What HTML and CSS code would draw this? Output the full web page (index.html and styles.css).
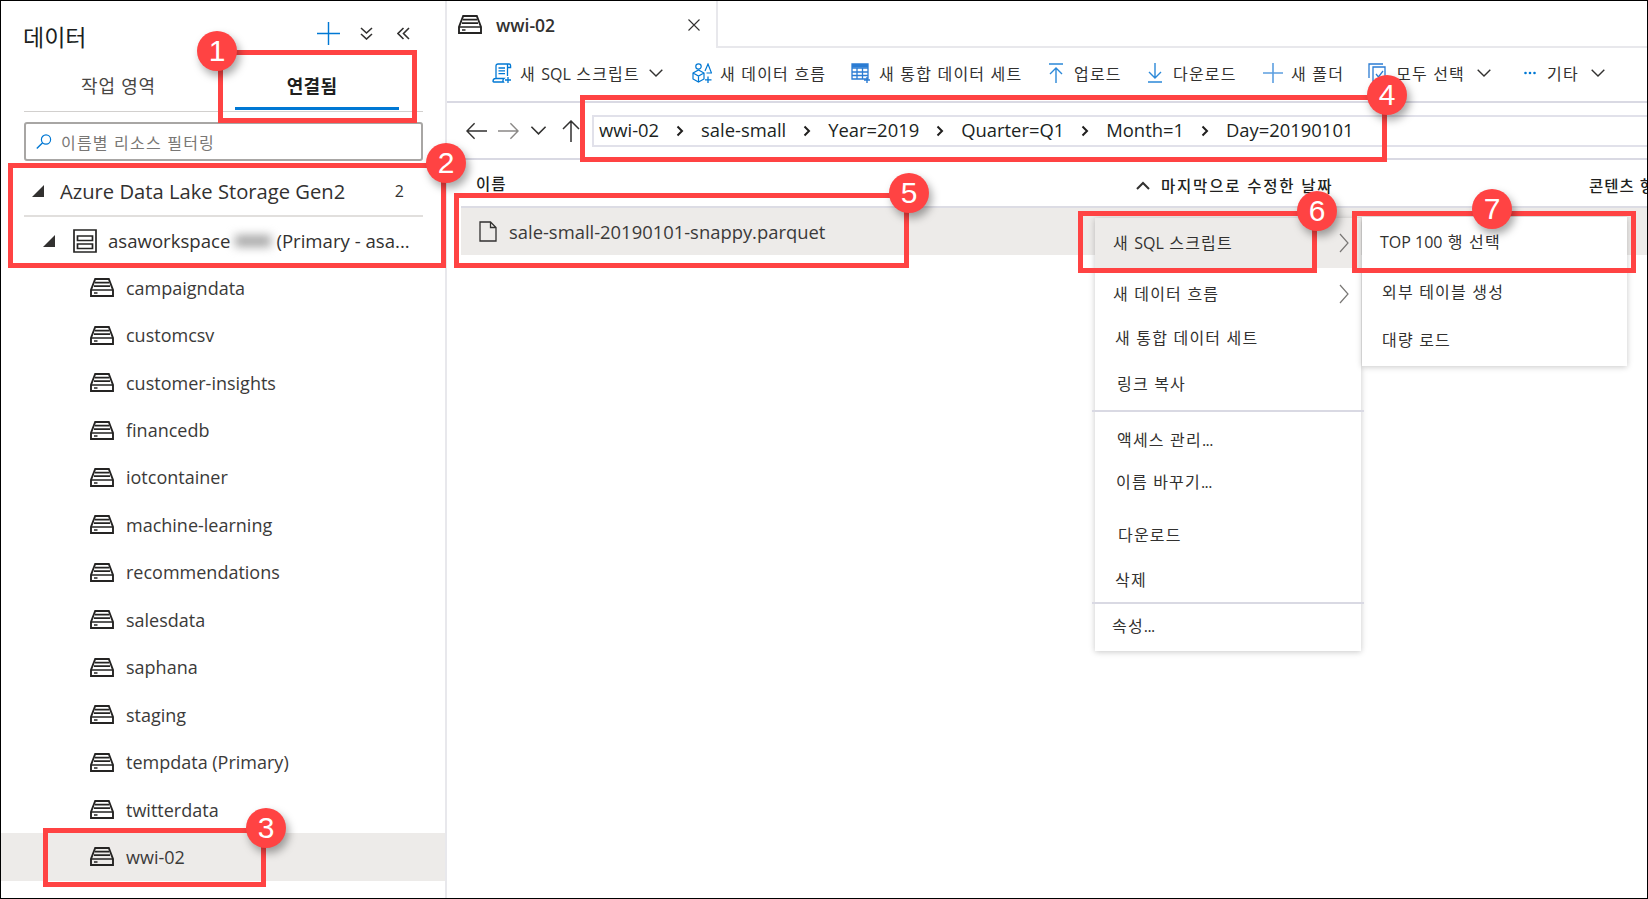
FILE: index.html
```html
<!DOCTYPE html>
<html lang="ko">
<head>
    <meta charset="UTF-8">
    <meta name="viewport" content="width=device-width, initial-scale=1.0">
    <title>데이터</title>
    <link rel="stylesheet" href="styles.css">
</head>
<body>
    <svg class="defs" width="0" height="0">
        <symbol id="drive" viewBox="0 0 24 19">
            <path d="M1 18V12L5.2 1H18.8L23 12V18Z" fill="none" stroke="#252423" stroke-width="1.9"/>
            <path d="M1 12H23M5 4.600H19M4 8.200H20M4 15H7.500" fill="none" stroke="#252423" stroke-width="1.700"/>
        </symbol>
        <symbol id="chev-down" viewBox="0 0 14 8">
            <path d="M.7.7 7 7 13.3.7" fill="none" stroke="#323130" stroke-width="1.4"/>
        </symbol>
        <symbol id="crumb" viewBox="0 0 8 12">
            <path d="M1.500 1.500 6 6 1.500 10.500" fill="none" stroke="#201f1e" stroke-width="2"/>
        </symbol>
        <symbol id="menu-arrow" viewBox="0 0 10 20">
            <path d="M1 1 9 10 1 19" fill="none" stroke="#797775" stroke-width="1.2"/>
        </symbol>
        <symbol id="corner" viewBox="0 0 12 12">
            <path d="M12 0V12H0Z" fill="#323130"/>
        </symbol>
    </svg>

    <div class="page">
        <div class="frame">
            <aside class="data-pane">
                <header class="pane-head">
                    <h1>데이터</h1>
                    <div class="pane-actions">
                        <svg class="ic-plus" viewBox="0 0 24 24"><path d="M12 0V24M0 12H24" stroke="#0078d4" stroke-width="1.5"/></svg>
                        <svg class="ic-double" viewBox="0 0 13 13"><path d="M1 1 6.500 6 12 1M1 7 6.500 12 12 7" fill="none" stroke="#323130" stroke-width="1.6"/></svg>
                        <svg class="ic-double" viewBox="0 0 13 13"><path d="M6.500 1 1 6.500 6.500 12M12 1 6.500 6.500 12 12" fill="none" stroke="#323130" stroke-width="1.6"/></svg>
                    </div>
                </header>

                <nav class="tabs">
                    <span class="tab">작업 영역</span>
                    <span class="tab tab-active">연결됨</span>
                </nav>

                <div class="search">
                    <svg class="ic-search" viewBox="0 0 16 15"><circle cx="10" cy="5.500" r="4.600" fill="none" stroke="#0078d4" stroke-width="1.2"/><path d="M6.600 8.800 .8 14.400" stroke="#0078d4" stroke-width="1.4"/></svg>
                    <span>이름별 리소스 필터링</span>
                </div>

                <div class="group-row">
                    <svg class="corner"><use href="#corner"/></svg>
                    <span class="group-name">Azure Data Lake Storage Gen2</span>
                    <span class="group-count">2</span>
                </div>

                <div class="account-row">
                    <svg class="corner"><use href="#corner"/></svg>
                    <svg class="ic-server" viewBox="0 0 24 24"><path d="M1 1H23V23H1ZM4.500 7H19.500V11.500H4.500ZM4.500 15H19.500V19.500H4.500Z" fill="none" stroke="#252423" stroke-width="1.7"/></svg>
                    <span class="account-name">asaworkspace<span class="redact"><i></i></span>(Primary - asa...</span>
                </div>

                <ul class="containers">
                    <li><svg class="ic-drive"><use href="#drive"/></svg>campaigndata</li>
                    <li><svg class="ic-drive"><use href="#drive"/></svg>customcsv</li>
                    <li><svg class="ic-drive"><use href="#drive"/></svg>customer-insights</li>
                    <li><svg class="ic-drive"><use href="#drive"/></svg>financedb</li>
                    <li><svg class="ic-drive"><use href="#drive"/></svg>iotcontainer</li>
                    <li><svg class="ic-drive"><use href="#drive"/></svg>machine-learning</li>
                    <li><svg class="ic-drive"><use href="#drive"/></svg>recommendations</li>
                    <li><svg class="ic-drive"><use href="#drive"/></svg>salesdata</li>
                    <li><svg class="ic-drive"><use href="#drive"/></svg>saphana</li>
                    <li><svg class="ic-drive"><use href="#drive"/></svg>staging</li>
                    <li><svg class="ic-drive"><use href="#drive"/></svg>tempdata (Primary)</li>
                    <li><svg class="ic-drive"><use href="#drive"/></svg>twitterdata</li>
                    <li class="selected"><svg class="ic-drive"><use href="#drive"/></svg>wwi-02</li>
                </ul>

                <div class="account-row account-next">
                    <svg class="corner"><use href="#corner"/></svg>
                    <svg class="ic-server" viewBox="0 0 24 24"><path d="M1 1H23V23H1ZM4.500 7H19.500V11.500H4.500ZM4.500 15H19.500V19.500H4.500Z" fill="none" stroke="#252423" stroke-width="1.7"/></svg>
                </div>
            </aside>

            <main class="explorer">
                <div class="tabbar">
                    <div class="doc-tab">
                        <svg class="ic-tab"><use href="#drive"/></svg>
                        <span class="doc-name">wwi-02</span>
                        <svg class="ic-close" viewBox="0 0 12 12"><path d="M.5.5 11.500 11.500M11.500.5 .5 11.500" stroke="#323130" stroke-width="1.1"/></svg>
                    </div>
                </div>

                <div class="toolbar">
                    <span class="tool tool-sql">
                        <svg class="ic-tool" viewBox="0 0 20 20"><path d="M4 15V3C4 1.800 4.800 1 6 1H17C18 1 18.600 1.800 18.600 2.800V4.500H15.500M15.500 1.500V13M1 18.500C1 16.500 2 15.500 3.500 15.500H12C10.800 16.500 10.800 18 11.500 19H2.500C1.500 19 1 18.800 1 18.500ZM6.500 5H13M6.500 7.800H13M6.500 10.600H13" fill="none" stroke="#0078d4" stroke-width="1.3"/><path d="M16 14V20M13 17H19" stroke="#0078d4" stroke-width="1.3"/></svg>
                        <span>새 <span class="latin">SQL</span> 스크립트</span>
                        <svg class="ic-chev"><use href="#chev-down"/></svg>
                    </span>
                    <span class="tool">
                        <svg class="ic-tool" viewBox="0 0 20 20"><path d="M1 10 6.500 7 12 10V16L6.500 19 1 16ZM1 10 6.500 13 12 10M6.500 13V19M13 8 16 1 19.500 10H14.500" fill="none" stroke="#0078d4" stroke-width="1.2"/><circle cx="6.500" cy="3.500" r="2.700" fill="none" stroke="#0078d4" stroke-width="1.200"/><path d="M16 13.500V20M13 16.800H19.500" stroke="#0078d4" stroke-width="1.300"/></svg>
                        새 데이터 흐름
                    </span>
                    <span class="tool">
                        <svg class="ic-tool" viewBox="0 0 20 20"><path d="M1 1H17V16H1ZM1 5H17M1 9H17M1 12.500H17M6 5V16M11.500 5V16" fill="none" stroke="#2b7cd3" stroke-width="1.300"/><path d="M1 1H17V4.500H1Z" fill="#2b7cd3"/><path d="M16 14V20M13 17H19" stroke="#2b7cd3" stroke-width="1.400"/></svg>
                        새 통합 데이터 세트
                    </span>
                    <span class="tool">
                        <svg class="ic-tool ic-thin" viewBox="0 0 14 20"><path d="M0 1H14M7 20V5M1 11 7 5 13 11" fill="none" stroke="#2b88d8" stroke-width="1.400"/></svg>
                        업로드
                    </span>
                    <span class="tool">
                        <svg class="ic-tool ic-thin" viewBox="0 0 14 20"><path d="M0 19H14M7 0V15M1 9 7 15 13 9" fill="none" stroke="#2b88d8" stroke-width="1.400"/></svg>
                        다운로드
                    </span>
                    <span class="tool">
                        <svg class="ic-tool" viewBox="0 0 20 20"><path d="M10 0V20M0 10H20" stroke="#5c9fe0" stroke-width="1.600"/></svg>
                        새 폴더
                    </span>
                    <span class="tool">
                        <svg class="ic-tool" viewBox="0 0 20 20"><path d="M1 15V1H15M5 4H17V18H5Z" fill="none" stroke="#2b7cd3" stroke-width="1.300"/><path d="M8 11 10.500 14 15 8" fill="none" stroke="#2b7cd3" stroke-width="1.300"/></svg>
                        모두 선택
                        <svg class="ic-chev"><use href="#chev-down"/></svg>
                    </span>
                    <span class="tool">
                        <svg class="ic-dots" viewBox="0 0 12 4"><circle cx="1.500" cy="2" r="1.300" fill="#0078d4"/><circle cx="6" cy="2" r="1.300" fill="#0078d4"/><circle cx="10.500" cy="2" r="1.300" fill="#0078d4"/></svg>
                        기타
                        <svg class="ic-chev"><use href="#chev-down"/></svg>
                    </span>
                </div>

                <div class="pathbar">
                    <div class="nav-arrows">
                        <svg class="ic-arrow" viewBox="0 0 22 18"><path d="M22 9H1M9 1 1 9 9 17" fill="none" stroke="#323130" stroke-width="1.500"/></svg>
                        <svg class="ic-arrow" viewBox="0 0 22 18"><path d="M0 9H21M13 1 21 9 13 17" fill="none" stroke="#8a8886" stroke-width="1.500"/></svg>
                        <svg class="ic-navchev"><use href="#chev-down"/></svg>
                        <svg class="ic-up" viewBox="0 0 18 22"><path d="M9 22V1M1 9 9 1 17 9" fill="none" stroke="#323130" stroke-width="1.500"/></svg>
                    </div>
                    <div class="breadcrumb">
                        <span>wwi-02</span><svg class="crumb"><use href="#crumb"/></svg>
                        <span>sale-small</span><svg class="crumb"><use href="#crumb"/></svg>
                        <span>Year=2019</span><svg class="crumb"><use href="#crumb"/></svg>
                        <span>Quarter=Q1</span><svg class="crumb"><use href="#crumb"/></svg>
                        <span>Month=1</span><svg class="crumb"><use href="#crumb"/></svg>
                        <span>Day=20190101</span>
                    </div>
                </div>

                <div class="file-head">
                    <span>이름</span>
                    <span class="sorted"><svg class="ic-sort" viewBox="0 0 14 9"><path d="M1 8 7 2 13 8" fill="none" stroke="#323130" stroke-width="2"/></svg>마지막으로 수정한 날짜</span>
                    <span class="cut">콘텐츠 형식</span>
                </div>

                <div class="file-row">
                    <svg class="ic-file" viewBox="0 0 18 21"><path d="M1 1H11.500L17 6.500V20H1ZM11.500 1V6.500H17" fill="none" stroke="#323130" stroke-width="1.300"/></svg>
                    sale-small-20190101-snappy.parquet
                </div>
            </main>
        </div>

        <ul class="menu">
            <li class="on">새 <span class="latin">SQL</span> 스크립트<svg class="menu-arrow"><use href="#menu-arrow"/></svg></li>
            <li>새 데이터 흐름<svg class="menu-arrow"><use href="#menu-arrow"/></svg></li>
            <li>새 통합 데이터 세트</li>
            <li>링크 복사</li>
            <li class="sep"></li>
            <li>액세스 관리<span class="dots">...</span></li>
            <li>이름 바꾸기<span class="dots">...</span></li>
            <li>다운로드</li>
            <li>삭제</li>
            <li class="sep"></li>
            <li>속성<span class="dots">...</span></li>
        </ul>

        <ul class="submenu">
            <li><span class="latin">TOP 100</span> 행 선택</li>
            <li>외부 테이블 생성</li>
            <li>대량 로드</li>
        </ul>

        <div class="mark mark-1"></div>
        <div class="mark mark-2"></div>
        <div class="mark mark-3"></div>
        <div class="mark mark-4"></div>
        <div class="mark mark-5"></div>
        <div class="mark mark-6"></div>
        <div class="mark mark-7"></div>

        <span class="badge badge-1">1</span>
        <span class="badge badge-2">2</span>
        <span class="badge badge-3">3</span>
        <span class="badge badge-4">4</span>
        <span class="badge badge-5">5</span>
        <span class="badge badge-6">6</span>
        <span class="badge badge-7">7</span>
    </div>
</body>
</html>
```

FILE: styles.css
```css
* {
    box-sizing: border-box;
}

body {
    margin: 0;
    background-color: #fff;
    color: #323130;
    font-family: "Open Sans", "Noto Sans CJK KR", sans-serif;
}

ul {
    list-style: none;
    margin: 0;
    padding: 0;
}

svg {
    display: block;
    flex: none;
}

.defs {
    position: absolute;
}

.latin {
    letter-spacing: 0;
}

.dots {
    letter-spacing: -.6px;
}

.page {
    position: relative;
    width: 1648px;
    height: 899px;
    overflow: hidden;
}

.frame {
    display: flex;
    height: 100%;
    border: 1px solid #000;
    overflow: hidden;
}

/* left pane */
.data-pane {
    flex: none;
    width: 446px;
    border-right: 2px solid #e8e8ec;
}

.pane-head {
    display: flex;
    align-items: center;
    justify-content: space-between;
    height: 70px;
    padding: 0 35px 0 22px;
}

h1 {
    margin: 0;
    font-size: 23px;
    font-weight: 400;
    color: #201f1e;
}

.pane-actions {
    display: flex;
    align-items: center;
    margin-bottom: 6px;
}

.ic-plus {
    width: 23px;
    height: 23px;
    margin-right: 20px;
}

.ic-double {
    width: 13px;
    height: 13px;
    margin-right: 24px;
}

.ic-double:last-child {
    margin-right: 0;
}

.tabs {
    display: flex;
    height: 41px;
    margin: 0 22px 0 23px;
    border-bottom: 1px solid #d2d0ce;
}

.tab {
    width: 211px;
    padding: 1px 22px 0 0;
    text-align: center;
    font-size: 18px;
    letter-spacing: .8px;
    color: #484644;
}

.tab-active {
    width: 164px;
    height: 39px;
    padding-right: 10px;
    border-bottom: 3px solid #0078d4;
    font-weight: 700;
    letter-spacing: .3px;
    color: #201f1e;
}

.search {
    display: flex;
    align-items: center;
    height: 39px;
    margin: 10px 22px 0 23px;
    padding-left: 10px;
    border: 2px solid #a8a6a4;
    border-radius: 3px;
    font-size: 16px;
    letter-spacing: 1.2px;
    color: #797775;
}

.ic-search {
    width: 16px;
    height: 15px;
    margin-right: 9px;
}

.group-row {
    display: flex;
    align-items: center;
    height: 56px;
    margin: 0 22px 0 23px;
    padding: 5px 0 0 8px;
    border-bottom: 2px solid #e1dfdd;
}

.corner {
    width: 12px;
    height: 12px;
}

.group-name {
    margin-left: 16px;
    font-size: 20.2px;
    font-weight: 500;
    white-space: nowrap;
}

.group-count {
    margin-left: auto;
    margin-right: 19px;
    font-size: 16px;
    font-weight: 500;
}

.account-row {
    display: flex;
    align-items: center;
    height: 47px;
    padding-left: 42px;
    font-size: 18px;
    font-weight: 500;
    white-space: nowrap;
}

.ic-server {
    width: 24px;
    height: 24px;
    margin-left: 18px;
}

.account-name {
    display: flex;
    align-items: center;
    margin-left: 11px;
    font-size: 18.6px;
}

.redact {
    display: block;
    width: 46px;
    padding: 0 5px;
}

.redact i {
    display: block;
    height: 12px;
    background-color: #a9a9a9;
    filter: blur(5px);
}

.containers li {
    display: flex;
    align-items: center;
    height: 47.45px;
    padding-left: 89px;
    font-size: 18px;
    color: #3b3a39;
}

.containers .selected {
    background-color: #edebe9;
}

.ic-drive {
    width: 24px;
    height: 19px;
    margin-right: 12px;
}

.account-next {
    padding-top: 32px;
}

/* right side */
.explorer {
    flex: 1;
    min-width: 0;
}

.tabbar {
    height: 47px;
    border-bottom: 2px solid #e8e8ec;
}

.doc-tab {
    display: flex;
    align-items: center;
    width: 271px;
    height: 47px;
    padding-left: 11px;
    background-color: #fff;
    border-right: 2px solid #e8e8ec;
}

.ic-tab {
    width: 24px;
    height: 19px;
    margin-right: 14px;
}

.doc-name {
    font-size: 17.5px;
    font-weight: 600;
}

.ic-close {
    width: 12px;
    height: 12px;
    margin-left: auto;
    margin-right: 16px;
}

.toolbar {
    display: grid;
    grid-template-columns: 200px 159px 198px 99px 115px 105px 156px auto;
    align-items: center;
    height: 55px;
    padding: 0 0 3px 45px;
    border-bottom: 2px solid #d9d9e3;
    font-size: 16px;
    letter-spacing: 1.2px;
    color: #323130;
}

.tool {
    display: flex;
    align-items: center;
    white-space: nowrap;
}

.ic-tool {
    width: 20px;
    height: 20px;
    margin-right: 8px;
}

.ic-thin {
    width: 14px;
    margin-right: 11px;
}

.ic-chev {
    width: 14px;
    height: 8px;
    margin-left: 12px;
}

.tool-sql .ic-chev {
    margin-left: 9px;
}

.ic-dots {
    width: 12px;
    height: 4px;
    margin-right: 11px;
}

.pathbar {
    display: flex;
    align-items: center;
    height: 57px;
    border-bottom: 2px solid #d9d9e3;
}

.nav-arrows {
    display: flex;
    align-items: center;
    width: 145px;
    flex: none;
    padding-left: 19px;
}

.ic-arrow {
    width: 21px;
    height: 18px;
    margin-right: 11px;
}

.ic-navchev {
    width: 17px;
    height: 9px;
    margin-right: 15px;
}

.ic-up {
    width: 18px;
    height: 22px;
}

.breadcrumb {
    display: flex;
    flex: 1;
    align-items: center;
    height: 32px;
    padding: 0 0 2px 5px;
    border: 2px solid #e1e1ea;
    border-right: none;
    font-size: 18.4px;
    color: #201f1e;
    white-space: nowrap;
}

.crumb {
    width: 8px;
    height: 12px;
    margin: 2px 17px 0;
}

.file-head {
    display: grid;
    grid-template-columns: 660px 453px 1fr;
    align-items: center;
    height: 46px;
    padding-left: 29px;
    font-size: 15.5px;
    font-weight: 500;
    letter-spacing: 1px;
    color: #201f1e;
    white-space: nowrap;
}

.sorted {
    display: flex;
    align-items: center;
    padding-top: 4px;
    letter-spacing: 1.8px;
}

.cut {
    padding-top: 4px;
}

.ic-sort {
    width: 14px;
    height: 9px;
    margin-right: 11px;
}

.file-row {
    display: flex;
    align-items: center;
    height: 49px;
    margin-left: 14px;
    padding-left: 18px;
    background-color: #edebe9;
    border-top: 2px solid #dcdce4;
    font-size: 18.4px;
    color: #3b3a39;
}

.ic-file {
    width: 18px;
    height: 21px;
    margin-right: 12px;
}

/* context menus */
.menu,
.submenu {
    position: absolute;
    background-color: #fff;
    box-shadow: 0 1px 6px rgba(0, 0, 0, .22);
    font-size: 16px;
    letter-spacing: 1.2px;
    color: #323130;
    white-space: nowrap;
}

.menu {
    left: 1095px;
    top: 218px;
    width: 266px;
    height: 433px;
}

.menu li {
    position: relative;
    height: 22px;
    line-height: 22px;
    padding-left: 18px;
}

.menu li:nth-child(1) {
    height: 50px;
    line-height: 50px;
    background-color: #edebe9;
}

.menu li:nth-child(2) { margin-top: 15px; }
.menu li:nth-child(3) { margin-top: 22px; padding-left: 20px; }
.menu li:nth-child(4) { margin-top: 24px; padding-left: 22px; }
.menu li:nth-child(6) { margin-top: 17px; padding-left: 22px; }
.menu li:nth-child(7) { margin-top: 20px; padding-left: 21px; }
.menu li:nth-child(8) { margin-top: 31px; padding-left: 23px; }
.menu li:nth-child(9) { margin-top: 23px; padding-left: 20px; }
.menu li:nth-child(11) { margin-top: 11px; padding-left: 17px; }

.menu .sep {
    height: 2px;
    margin: 15px -3px 0;
    padding: 0;
    background-color: #d9d9e3;
}

.menu .sep:nth-child(10) {
    margin-top: 11px;
}

.menu-arrow {
    position: absolute;
    right: 12px;
    top: 50%;
    width: 10px;
    height: 20px;
    margin-top: -10px;
}

.submenu {
    left: 1362px;
    top: 217px;
    width: 265px;
    height: 149px;
    padding: 14px 0 0 18px;
}

.submenu li {
    height: 22px;
    line-height: 22px;
    margin-bottom: 28px;
}

.submenu li + li {
    margin-bottom: 26px;
    padding-left: 2px;
}

/* call-outs */
.mark {
    position: absolute;
    border: 5px solid #ff4343;
}

.mark-1 { left: 218px; top: 50px; width: 199px; height: 73px; }
.mark-2 { left: 8px; top: 163px; width: 438px; height: 105px; }
.mark-3 { left: 43px; top: 828px; width: 223px; height: 59px; }
.mark-4 { left: 580px; top: 95px; width: 807px; height: 67px; }
.mark-5 { left: 454px; top: 193px; width: 455px; height: 75px; }
.mark-6 { left: 1078px; top: 211px; width: 239px; height: 62px; }
.mark-7 { left: 1352px; top: 211px; width: 284px; height: 62px; }

.badge {
    position: absolute;
    width: 40px;
    height: 40px;
    margin: -20px 0 0 -20px;
    border-radius: 50%;
    background-color: #ff4343;
    box-shadow: 3px 5px 8px rgba(0, 0, 0, .35);
    font-family: "Liberation Sans", sans-serif;
    font-size: 30px;
    line-height: 40px;
    text-align: center;
    color: #fff;
}

.badge-1 { left: 217px; top: 51px; }
.badge-2 { left: 446px; top: 163px; }
.badge-3 { left: 266px; top: 828px; }
.badge-4 { left: 1387px; top: 95px; }
.badge-5 { left: 909px; top: 193px; }
.badge-6 { left: 1317px; top: 211px; }
.badge-7 { left: 1492px; top: 209px; }
```
